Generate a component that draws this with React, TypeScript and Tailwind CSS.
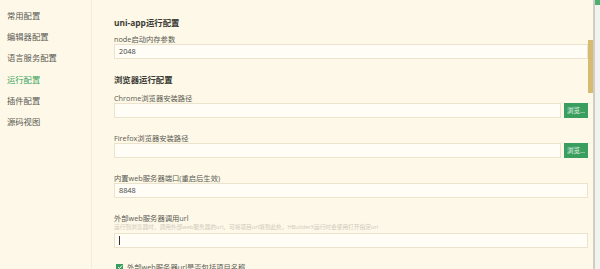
import React from "react";

const font = { fontFamily: '"Open Sans", "Noto Sans CJK SC", sans-serif' };

function Label({ children, className = "" }: { children: React.ReactNode; className?: string }) {
  return <div className={`h-[10px] leading-[10px] text-[7.3px] text-[#5a5a52] ${className}`}>{children}</div>;
}

function Input({ value, className = "", children }: { value?: string; className?: string; children?: React.ReactNode }) {
  return (
    <div className={`h-[15px] flex items-center border border-[#ebe3cb] bg-[#fffdf6] pl-[4px] text-[7.3px] text-[#444] ${className}`}>
      {value}
      {children}
    </div>
  );
}

function PathRow() {
  return (
    <div className="flex h-[15px] gap-[3px]">
      <Input className="flex-1" />
      <div className="w-[24px] h-[15px] bg-[#3a9e5f] text-[#e8f5ec] text-[6.5px] flex items-center justify-center">浏览...</div>
    </div>
  );
}

export default function App() {
  const items = ["常用配置", "编辑器配置", "语言服务配置", "运行配置", "插件配置", "源码视图"];
  return (
    <div className="w-[600px] h-[269px] overflow-hidden flex bg-[#fdf8e8]" style={font}>
      <div className="w-[92px] shrink-0 border-r border-[#f3edd9] pt-[10px] pl-[7px]">
        {items.map((t, i) => (
          <div
            key={t}
            className={`h-[21.2px] leading-[12px] text-[8.3px] ${i === 3 ? "text-[#3da55c]" : "text-[#5a5a52]"}`}
          >
            {t}
          </div>
        ))}
      </div>
      <div className="flex-1 pl-[22px] pt-[17px]">
        <div className="h-[12px] leading-[12px] text-[8.4px] font-bold text-[#3c3c36]">uni-app运行配置</div>
        <Label className="mt-[5px]">node启动内存参数</Label>
        <Input value="2048" />
        <div className="mt-[15px] h-[12px] leading-[12px] text-[8.4px] font-bold text-[#3c3c36]">浏览器运行配置</div>
        <Label className="mt-[7px]">Chrome浏览器安装路径</Label>
        <PathRow />
        <Label className="mt-[15px]">Firefox浏览器安装路径</Label>
        <PathRow />
        <Label className="mt-[15px]">内置web服务器端口(重启后生效)</Label>
        <Input value="8848" />
        <Label className="mt-[15px]">外部web服务器调用url</Label>
        <div className="h-[10px] leading-[9px] text-[5.7px] text-[#cfcabb] whitespace-nowrap overflow-hidden">
          运行到浏览器时，调用外部web服务器的url。可将项目url填到此处，HBuilderX运行时会使用打开指定url
        </div>
        <Input className="border-[#b7d8bb]">
          <div className="w-[1px] h-[9px] bg-[#333]" />
        </Input>
        <div className="mt-[13px] flex items-center h-[12px] gap-[4px] pl-[2px]">
          <div className="w-[7px] h-[7px] bg-[#3a9e5f] flex items-center justify-center">
            <svg width="6" height="6" viewBox="0 0 6 6">
              <path d="M1 3 L2.5 4.5 L5 1.5" stroke="#fff" strokeWidth="1" fill="none" />
            </svg>
          </div>
          <div className="text-[7.3px] text-[#5a5a52]">外部web服务器url是否包括项目名称</div>
        </div>
      </div>
      <div className="w-[12px] shrink-0 flex">
        <div className="w-[5px] pt-[40px]">
          <div className="h-[53px] w-[5px] bg-[#d8bb72]" />
        </div>
        <div className="w-[2px] bg-[#cfcdc6]" />
        <div className="w-[5px] bg-[#f2f2ef] flex flex-col">
          <div className="h-[5px] bg-[#4caf70]" />
        </div>
      </div>
    </div>
  );
}
